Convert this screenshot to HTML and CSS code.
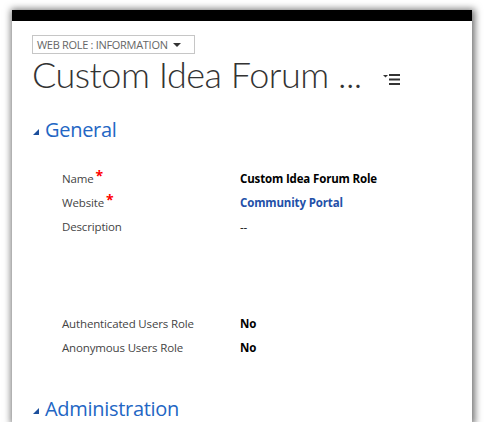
FILE: index.html
```html
<!DOCTYPE html>
<html lang="en">
<head>
  <meta charset="UTF-8" />
  <title>Web Role : Information</title>
  <link rel="stylesheet" href="styles.css">
</head>
<body>
  <div class="window">
    <div class="topbar"></div>
    <div class="content">
      <div class="form-select">WEB ROLE : INFORMATION <span class="caret"></span></div>
      <div class="title-row">
        <h1>Custom Idea Forum ...</h1>
        <svg class="menu-icon" width="17" height="11" viewBox="0 0 17 11">
          <path d="M0 1h5l-2.5 2.5z" fill="#333" />
          <rect x="6" y="0" width="11" height="2" fill="#333" />
          <rect x="6" y="4.5" width="11" height="2" fill="#333" />
          <rect x="6" y="9" width="11" height="2" fill="#333" />
        </svg>
      </div>

      <h2 class="section"><span class="tri"></span>General</h2>
      <div class="fields">
        <div class="row">
          <span class="label">Name<span class="req">*</span></span>
          <span class="value">Custom Idea Forum Role</span>
        </div>
        <div class="row">
          <span class="label">Website<span class="req">*</span></span>
          <span class="value link">Community Portal</span>
        </div>
        <div class="row desc">
          <span class="label">Description</span>
          <span class="value plain">--</span>
        </div>
        <div class="row">
          <span class="label">Authenticated Users Role</span>
          <span class="value">No</span>
        </div>
        <div class="row">
          <span class="label">Anonymous Users Role</span>
          <span class="value">No</span>
        </div>
      </div>

      <h2 class="section admin"><span class="tri"></span>Administration</h2>
    </div>
  </div>
</body>
</html>
```

FILE: styles.css
```css
body {
  margin: 0;
  background: #fff;
  font-family: 'Segoe UI', 'Open Sans', 'Noto Sans', sans-serif;
}
.window {
  margin: 10px 0 0 12px;
  width: 460px;
  height: 412px;
  background: #fff;
  overflow: hidden;
  box-shadow: 1px 1px 7px 2px rgba(0, 0, 0, 0.55);
}
.topbar {
  height: 11px;
  background: #000;
}
.content {
  padding: 11px 0 0 20px;
}
.form-select {
  display: inline-flex;
  align-items: center;
  height: 17px;
  width: 157px;
  border: 1px solid #c6c6c6;
  padding-left: 4px;
  font-size: 11px;
  color: #666;
  letter-spacing: -0.3px;
}
.caret {
  display: inline-block;
  margin-left: 5px;
  border-left: 4px solid transparent;
  border-right: 4px solid transparent;
  border-top: 4px solid #333;
}
.title-row {
  display: flex;
  align-items: center;
}
h1 {
  margin: 0;
  font-family: 'Segoe UI Light', Lato, 'Open Sans', sans-serif;
  font-size: 36px;
  font-weight: 300;
  line-height: 40px;
  letter-spacing: -0.5px;
  color: #333;
}
.menu-icon {
  margin: 10px 0 0 21px;
}
.section {
  margin: 23px 0 0;
  display: flex;
  align-items: center;
  font-size: 20px;
  font-weight: 400;
  color: #2366c4;
  line-height: 26px;
  letter-spacing: -0.3px;
}
.tri {
  width: 0;
  height: 0;
  margin: 4px 6px 0 1px;
  border-left: 6px solid transparent;
  border-bottom: 6px solid #1c4f9c;
}
.fields {
  margin: 26px 0 0 30px;
}
.row {
  display: flex;
  height: 24px;
  font-size: 11.5px;
  line-height: 20px;
  letter-spacing: -0.15px;
}
.row.desc {
  height: 97px;
}
.label {
  width: 178px;
  color: #444;
}
.req {
  color: #f00;
  font-weight: bold;
  font-size: 14px;
  margin-left: 2px;
  vertical-align: top;
  line-height: 14px;
}
.value {
  font-weight: bold;
  color: #000;
}
.value.link {
  color: #2350a8;
}
.value.plain {
  font-weight: normal;
}
.section.admin {
  margin-top: 34px;
}
```
